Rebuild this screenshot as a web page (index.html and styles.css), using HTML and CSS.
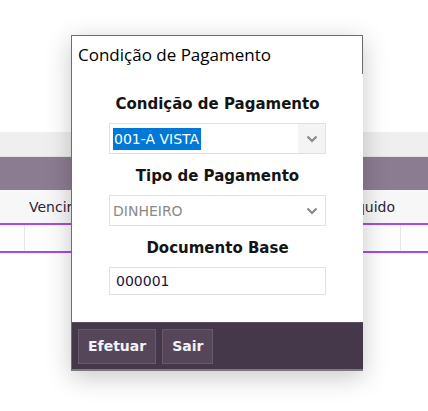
FILE: index.html
```html
<!DOCTYPE html>
<html lang="pt">
<head>
<meta charset="utf-8">
<title>Condição de Pagamento</title>
<link rel="stylesheet" href="styles.css">
</head>
<body>
<div class="page">
  <div class="top-space"></div>
  <div class="toolbar-band"></div>
  <div class="purple-band"></div>
  <div class="grid-head">
    <span class="col-venc">Vencimento</span>
    <span class="col-liq">Valor Líquido</span>
  </div>
  <div class="grid-line"></div>
  <div class="grid-row">
    <span class="cell cell-a"></span>
    <span class="cell cell-b"></span>
    <span class="cell cell-c"></span>
  </div>
  <div class="grid-line"></div>
</div>

<div class="dialog">
  <div class="dlg-title">Condição de Pagamento</div>
  <div class="dlg-body">
    <div class="label first">Condição de Pagamento</div>
    <div class="select sel-active">
      <span class="sel-text"><span class="hl">001-A VISTA</span></span>
      <span class="sel-btn grey">
        <svg width="12" height="8" viewBox="0 0 12 8"><path d="M1.5 1.5 L6 6 L10.5 1.5" fill="none" stroke="#8a8a8a" stroke-width="2.2"/></svg>
      </span>
    </div>
    <div class="label">Tipo de Pagamento</div>
    <div class="select">
      <span class="sel-text muted">DINHEIRO</span>
      <span class="sel-btn">
        <svg width="12" height="8" viewBox="0 0 12 8"><path d="M1.5 1.5 L6 6 L10.5 1.5" fill="none" stroke="#8a8a8a" stroke-width="2.2"/></svg>
      </span>
    </div>
    <div class="label">Documento Base</div>
    <div class="input">000001</div>
  </div>
  <div class="dlg-footer">
    <button class="btn">Efetuar</button>
    <button class="btn">Sair</button>
  </div>
</div>
</body>
</html>
```

FILE: styles.css
```css
html, body {
  margin: 0;
  padding: 0;
  background: #ffffff;
  width: 428px;
  height: 411px;
  overflow: hidden;
  font-family: "DejaVu Sans", Tahoma, sans-serif;
}

.page {
  display: flex;
  flex-direction: column;
}

.top-space { height: 132px; background: #ffffff; }
.toolbar-band { height: 24px; background: #efefef; border-bottom: 1px solid #e2e2e2; }
.purple-band { height: 33px; background: #8c7c92; }

.grid-head {
  height: 33px;
  background: #f7f7f7;
  display: flex;
  align-items: center;
  justify-content: space-between;
  padding: 0 0 0 29px;
  font-family: "DejaVu Sans", sans-serif;
  font-size: 14px;
  color: #2a2438;
  overflow: hidden;
}
.col-venc { white-space: nowrap; }
.col-liq { white-space: nowrap; margin-right: 33px; }

.grid-line { height: 2px; background: #a54af0; }

.grid-row {
  height: 26px;
  display: flex;
  background: #fdfdfd;
}
.cell { display: block; height: 100%; }
.cell-a { width: 24px; border-right: 1px solid #e6e6e6; }
.cell-b { flex: 1; border-right: 1px solid #e6e6e6; }
.cell-c { width: 27px; }

.dialog {
  position: absolute;
  left: 71px;
  top: 35px;
  width: 291px;
  background: #ffffff;
  border-left: 1px solid #6e6e6e;
  border-top: 1px solid #6e6e6e;
  border-bottom: 2px solid #7a7a7a;
  box-shadow: 0 6px 24px rgba(0,0,0,0.22);
  display: flex;
  flex-direction: column;
}

.dlg-title {
  height: 37px;
  border-right: 1px solid #6e6e6e;
  display: flex;
  align-items: center;
  padding-left: 6px;
  padding-bottom: 1px;
  font-family: "Open Sans", "Noto Sans", sans-serif;
  font-size: 17px;
  color: #000;
}

.dlg-body {
  height: 248px;
  display: flex;
  flex-direction: column;
  align-items: center;
  padding-top: 8px;
  box-sizing: border-box;
}

.label {
  font-family: "DejaVu Sans", sans-serif;
  font-weight: bold;
  font-size: 15px;
  line-height: 20px;
  color: #141414;
  margin-top: 12px;
  margin-bottom: 9px;
}

.select, .input {
  width: 217px;
  box-sizing: border-box;
  border: 1.5px solid #e1e1e1;
  background: #fff;
  display: flex;
  align-items: center;
  font-family: "DejaVu Sans", sans-serif;
  font-size: 14px;
}
.select { height: 31px; }
.input { height: 28px; padding-left: 6px; color: #1c1440; }

.sel-text { flex: 1; padding-left: 3px; color: #222; white-space: nowrap; }
.sel-text.muted { color: #8a8a8a; padding-left: 3px; }
.hl {
  background: #0078d7;
  color: #fff;
  padding: 2px 2px 2px 1px;
  display: inline-block;
  line-height: 18px;
}
.sel-btn {
  width: 27px;
  align-self: stretch;
  display: flex;
  align-items: center;
  justify-content: center;
}
.sel-btn.grey { background: #f4f4f4; }

.dlg-footer {
  height: 47px;
  background: #46384b;
  display: flex;
  align-items: center;
  gap: 6px;
  padding-left: 6px;
  border-top: 1px solid #5a4c5e;
  box-sizing: border-box;
}

.btn {
  height: 35px;
  padding: 0 9px;
  background: #554759;
  border: 1px solid #665a6b;
  color: #f2f2fa;
  font-family: "DejaVu Sans", sans-serif;
  font-weight: bold;
  font-size: 14px;
  cursor: pointer;
}
```
